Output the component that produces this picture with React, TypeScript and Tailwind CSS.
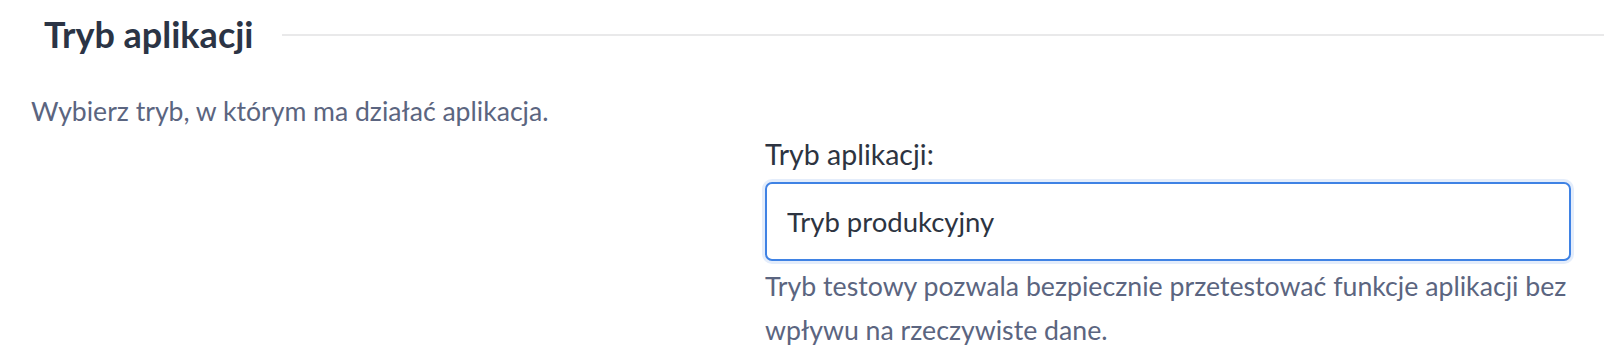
import { useState } from "react";

export default function App() {
  const [mode, setMode] = useState("Tryb produkcyjny");

  return (
    <div className="w-[1604px] h-[356px] bg-white overflow-hidden font-['Lato','Liberation_Sans',sans-serif]">
      {/* section header */}
      <div className="flex items-center h-[68px] pl-[44px]">
        <h2 className="text-[36px] leading-none font-bold text-[#2b3445] whitespace-nowrap">Tryb aplikacji</h2>
        <div className="flex-1 ml-[28px] mt-[2px] h-[2px] bg-[#e9e9ea]" />
      </div>

      <p className="mt-[22px] pl-[31px] text-[26.6px] leading-[43px] text-[#5b6580]">
        Wybierz tryb, w którym ma działać aplikacja.
      </p>

      <div className="flex justify-end pr-[33px]">
        <div className="w-[806px]">
          <label className="block text-[28.5px] leading-[43px] text-[#2d3441]">Tryb aplikacji:</label>
          <input
            value={mode}
            onChange={(e) => setMode(e.target.value)}
            className="mt-[6px] block w-full h-[79px] px-[20px] rounded-[7px] border-2 border-[#3f82e4] bg-white text-[27.5px] text-[#2d3441] outline-none shadow-[0_0_0_3px_rgba(63,130,228,0.14)]"
          />
          <p className="mt-[3px] text-[26.7px] leading-[44px] text-[#5b6580]">
            Tryb testowy pozwala bezpiecznie przetestować funkcje aplikacji bez wpływu na rzeczywiste dane.
          </p>
        </div>
      </div>
    </div>
  );
}
